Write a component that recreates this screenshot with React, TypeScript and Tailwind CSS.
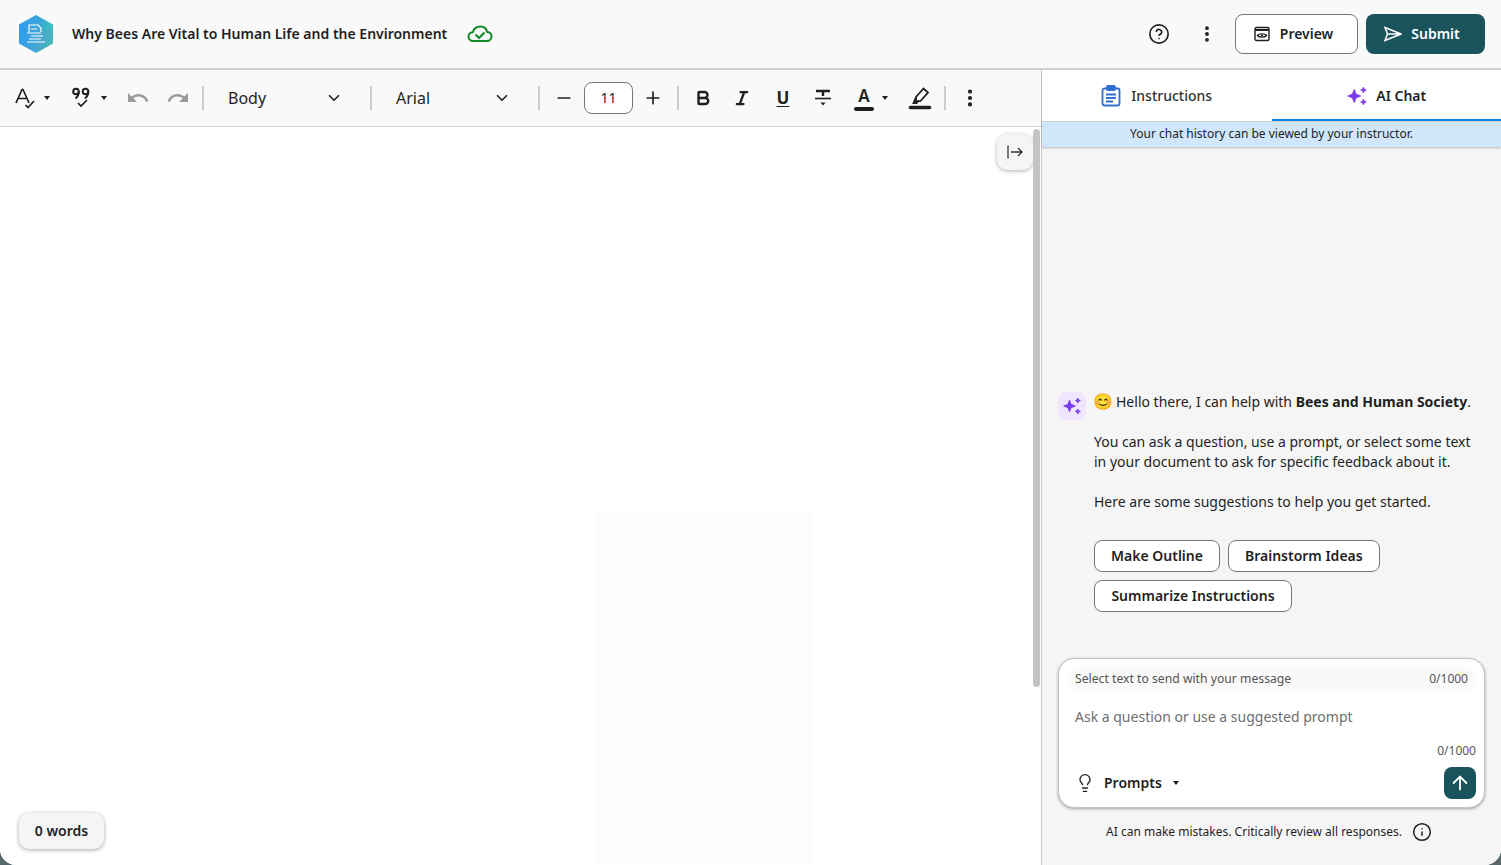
import React from 'react';
import { ArrowUp, Bold, ChevronDown, CircleHelp, EllipsisVertical, Info, Italic, Lightbulb, Minus, Plus } from 'lucide-react';
import { MdRedo, MdUndo } from 'react-icons/md';

function Caret() {
  return <span className="inline-block w-0 h-0 border-x-[3.5px] border-x-transparent border-t-[4px] border-t-[#1f1f1f]" />;
}

function Divider() {
  return <span className="block w-[2px] h-6 bg-[#cccccc]" />;
}

function Sparkles({ size }: { size: number }) {
  return (
    <svg width={size} height={size} viewBox="0 0 24 24" fill="#7c3aed" stroke="#7c3aed" strokeWidth="1" strokeLinejoin="round">
      <path d="M9 5 L11 10 L16 12 L11 14 L9 19 L7 14 L2 12 L7 10Z" />
      <path d="M19 2.5 L19.9 4.6 L22 5.5 L19.9 6.4 L19 8.5 L18.1 6.4 L16 5.5 L18.1 4.6Z" />
      <path d="M19 15.5 L19.9 17.6 L22 18.5 L19.9 19.4 L19 21.5 L18.1 19.4 L16 18.5 L18.1 17.6Z" />
    </svg>
  );
}

function Logo() {
  return (
    <svg width="36" height="40" viewBox="0 0 36 40">
      <defs>
        <linearGradient id="hexFill" x1="0" y1="0.2" x2="1" y2="0.5">
          <stop offset="0" stopColor="#2f9bf0" />
          <stop offset="0.6" stopColor="#3ea6d8" />
          <stop offset="1" stopColor="#2fd3b0" />
        </linearGradient>
      </defs>
      <path d="M18 1 L35 10.5 L35 29.5 L18 39 L1 29.5 L1 10.5Z" fill="url(#hexFill)" />
      <path d="M18 21 L35 12 L35 29.5 L18 39Z" fill="#5aa0c8" fillOpacity="0.55" />
      <g fill="none" stroke="#ffffff" strokeWidth="1.2">
        <path d="M11 18 V11 H20 L23 14 V18" />
        <path d="M13 15 H19 M9 19 H23 M13 22 H25 M11 25 H23 M9 28 H27" />
      </g>
    </svg>
  );
}

function SpellCheck() {
  return (
    <svg width="24" height="24" viewBox="0 0 24 24" fill="none" stroke="#1f1f1f" strokeWidth="1.7">
      <path d="M2 17 L8 3.5 H9 L15 17 M4.2 12.5 H12.8" />
      <path d="M11.5 19 L14 21.5 L20 15" />
    </svg>
  );
}

function QuoteCheck() {
  return (
    <svg width="24" height="24" viewBox="0 0 24 24" fill="none" stroke="#1f1f1f" strokeWidth="2">
      <circle cx="7" cy="5.5" r="2.8" />
      <path d="M9.8 5.5 C9.8 9 8.4 11 6.4 12.5" />
      <circle cx="16.5" cy="5.5" r="2.8" />
      <path d="M19.3 5.5 C19.3 9 17.9 11 15.9 12.5" />
      <path d="M9 17 L12 20 L18 14" strokeWidth="1.7" />
    </svg>
  );
}

function Toolbar() {
  return (
    <div className="h-[57px] flex items-center bg-[#f9f9f9] border-b border-[#d4d4d4] shadow-[0_1px_2px_rgba(0,0,0,0.15)] pl-[14px] text-[#1f1f1f] relative">
      <SpellCheck />
      <span className="ml-[6px] flex"><Caret /></span>
      <span className="ml-[19px]"><QuoteCheck /></span>
      <span className="ml-[8px] flex"><Caret /></span>
      <MdUndo size={24} className="ml-[19px] text-[#9a9a9a]" />
      <MdRedo size={24} className="ml-[16px] text-[#9a9a9a]" />
      <span className="ml-[12px]"><Divider /></span>
      <div className="w-[166px] pl-[24px] pr-[27px] flex items-center justify-between text-base">
        <span>Body</span>
        <ChevronDown size={18} strokeWidth={2.2} />
      </div>
      <Divider />
      <div className="w-[166px] pl-[24px] pr-[27px] flex items-center justify-between text-base">
        <span>Arial</span>
        <ChevronDown size={18} strokeWidth={2.2} />
      </div>
      <Divider />
      <Minus size={20} strokeWidth={2} className="ml-[14px]" />
      <div className="ml-[10px] w-[49px] h-[32px] rounded-lg border border-[#777777] bg-white flex items-center justify-center text-sm">11</div>
      <Plus size={20} strokeWidth={2} className="ml-[10px]" />
      <span className="ml-[14px]"><Divider /></span>
      <Bold size={18} strokeWidth={3.2} className="ml-[15px]" />
      <Italic size={18} strokeWidth={3} className="ml-[21px]" />
      <div className="ml-[23px] w-[18px] flex flex-col items-center">
        <span className="font-bold text-[17px] leading-[20px] underline underline-offset-2">U</span>
      </div>
      <svg width="24" height="24" viewBox="0 0 24 24" className="ml-[19px]" fill="none" stroke="#1f1f1f">
        <path d="M5 5 H19 M12 5 V10" strokeWidth="2.4" />
        <path d="M4 12.5 H20" strokeWidth="1.6" />
        <path d="M9.5 16.5 H14.5 L12 19.5Z" fill="#1f1f1f" stroke="none" />
      </svg>
      <div className="ml-[19px] w-[20px] flex flex-col items-center">
        <span className="font-semibold text-[17px] leading-[20px]">A</span>
        <span className="w-[20px] h-[4px] mt-[1px] rounded-full bg-[#1f1f1f]" />
      </div>
      <span className="ml-[8px] flex"><Caret /></span>
      <svg width="24" height="26" viewBox="0 0 24 26" className="ml-[20px]" fill="none" stroke="#1f1f1f" strokeWidth="1.8">
        <path d="M8 12 L15.5 3.5 L20 7.5 L12.5 16 L8 16.5Z" />
        <path d="M8 12 L5.5 18 H8.5 L10 16.5" />
        <path d="M2.5 22.5 H21.5" strokeWidth="3.6" strokeLinecap="round" />
      </svg>
      <span className="ml-[12px]"><Divider /></span>
      <EllipsisVertical size={22} strokeWidth={2.6} className="ml-[13px]" />
    </div>
  );
}

function Editor() {
  return (
    <div className="flex-1 min-w-0 flex flex-col">
      <Toolbar />
      <div className="flex-1 bg-white relative flex flex-col items-center overflow-hidden">
        <button className="absolute right-[8px] top-[7px] w-[36px] h-[36px] rounded-[11px] bg-[#f5f5f5] shadow-[0_1px_4px_rgba(0,0,0,0.3)] flex items-center justify-center">
          <svg width="18" height="18" viewBox="0 0 18 18" fill="none" stroke="#333333" strokeWidth="1.3">
            <path d="M2 2.5 V15.5 M5 9 H16 M12 5 L16 9 L12 13" />
          </svg>
        </button>
        <div className="absolute right-[1px] top-[2px] w-[7px] h-[558px] rounded bg-[#c4c4c4]" />
        <div className="absolute left-[597px] top-[385px] w-[214px] h-[352px] bg-[#fcfcfc]" />
        <div className="absolute left-[19px] bottom-[16px] h-[36px] w-[85px] rounded-[10px] bg-[#f5f5f5] shadow-[0_1px_4px_rgba(0,0,0,0.35)] flex items-center justify-center text-sm font-semibold text-[#1f1f1f]">0 words</div>
      </div>
    </div>
  );
}

function ChatPanel() {
  return (
    <div className="w-[460px] shrink-0 flex flex-col border-l border-[#c9c9c9] bg-[#f5f5f5] text-[#1f1f1f]">
      <div className="h-[52px] bg-white border-b border-[#d4d4d4] flex">
        <div className="flex-1 flex items-center justify-center gap-[10px] text-sm font-medium text-[#333333]">
          <svg width="20" height="22" viewBox="0 0 20 22" fill="none" stroke="#2f6fd6" strokeWidth="1.8">
            <rect x="1.5" y="3.5" width="17" height="17" rx="2" />
            <rect x="6" y="1" width="8" height="4" rx="1" fill="#2f6fd6" />
            <path d="M5 9.5 H15 M5 13 H15 M5 16.5 H12" />
          </svg>
          <span>Instructions</span>
        </div>
        <div className="flex-1 flex items-center justify-center gap-[8px] pt-[2px] text-sm font-semibold border-b-[2px] border-[#0a84e8]">
          <Sparkles size={22} />
          <span>AI Chat</span>
        </div>
      </div>
      <div className="h-[25px] pb-[1px] bg-[#d0e6fa] shadow-[0_1px_2px_rgba(0,0,0,0.25)] flex items-center justify-center text-xs">
        Your chat history can be viewed by your instructor.
      </div>
      <div className="flex-1 flex flex-col justify-end px-[16px]">
        <div className="flex gap-[8px]">
          <div className="w-[28px] h-[28px] shrink-0 rounded-lg bg-[#efe5ff] flex items-center justify-center">
            <Sparkles size={20} />
          </div>
          <div className="text-sm leading-[20px]">
            <p className="flex items-center">
              <span className="w-[18px] mr-[4px] flex justify-center text-[16px] leading-[20px] -translate-y-px">😊</span>
              <span>Hello there, I can help with <b className="font-bold">Bees and Human Society</b>.</span>
            </p>
            <p className="mt-[20px] w-[385px]">You can ask a question, use a prompt, or select some text in your document to ask for specific feedback about it.</p>
            <p className="mt-[20px]">Here are some suggestions to help you get started.</p>
            <div className="mt-[28px] flex flex-wrap gap-x-[8px] gap-y-[8px] font-semibold">
              <button className="h-[32px] px-[16px] rounded-lg border border-[#777777] bg-white">Make Outline</button>
              <button className="h-[32px] px-[16px] rounded-lg border border-[#777777] bg-white">Brainstorm Ideas</button>
              <button className="h-[32px] w-[198px] rounded-lg border border-[#777777] bg-white">Summarize Instructions</button>
            </div>
          </div>
        </div>
        <div className="mt-[46px] h-[150px] rounded-[16px] bg-white border border-[#c4c4c4] shadow-[0_1px_3px_rgba(0,0,0,0.35)] p-[8px] flex flex-col">
          <div className="h-[24px] rounded-full bg-[#f9f9f9] px-[8px] flex items-center justify-between text-[12.2px] text-[#555555]">
            <span>Select text to send with your message</span>
            <span className="text-xs">0/1000</span>
          </div>
          <div className="mt-[16px] px-[8px] text-sm text-[#6e6e6e] leading-[20px]">Ask a question or use a suggested prompt</div>
          <div className="mt-[16px] text-right text-xs text-[#555555] leading-[16px]">0/1000</div>
          <div className="mt-[8px] flex items-center justify-between">
            <div className="flex items-center pl-[8px] text-sm font-semibold">
              <Lightbulb size={20} strokeWidth={1.6} />
              <span className="ml-[9px]">Prompts</span>
              <span className="ml-[11px] flex"><Caret /></span>
            </div>
            <button className="w-[32px] h-[32px] rounded-lg bg-[#19535c] flex items-center justify-center text-white">
              <ArrowUp size={22} strokeWidth={2} />
            </button>
          </div>
        </div>
        <div className="h-[57px] pb-[9px] pr-[5px] flex items-center justify-center gap-[10px] text-xs">
          <span>AI can make mistakes. Critically review all responses.</span>
          <Info size={20} strokeWidth={1.8} />
        </div>
      </div>
    </div>
  );
}

export default function App() {
  return (
    <div className="w-[1501px] h-[865px] bg-[#56686a]">
      <div className="w-full h-full overflow-hidden rounded-b-[16px] flex flex-col bg-white font-['Noto_Sans',sans-serif]">
        <header className="h-[70px] shrink-0 bg-[#f9f9f9] border-b-2 border-[#cfcfcf] flex items-center pl-[18px] pr-[16px] text-[#1f1f1f]">
          <Logo />
          <h1 className="ml-[18px] text-sm font-semibold">Why Bees Are Vital to Human Life and the Environment</h1>
          <svg width="26" height="20" viewBox="0 0 26 20" fill="none" stroke="#0e8a24" strokeWidth="2" className="ml-[20px]">
            <path d="M6.5 17 C3.5 17 1.5 15 1.5 12.5 C1.5 10 3.5 8.2 5.8 8.2 C7 4.5 10 2.5 13.5 2.5 C17 2.5 19.5 5 20.2 8 C22.8 8.3 24.5 10.2 24.5 12.5 C24.5 15 22.5 17 19.5 17Z" />
            <path d="M8.5 10.5 L12 14 L17.5 8.5" />
          </svg>
          <div className="ml-auto flex items-center">
            <CircleHelp size={22} strokeWidth={1.8} />
            <EllipsisVertical size={20} strokeWidth={2.6} className="ml-[27px]" />
            <button className="ml-[18px] w-[123px] h-[40px] pr-[6px] rounded-lg border border-[#777777] bg-white flex items-center justify-center gap-[10px] text-sm font-semibold">
              <svg width="16" height="16" viewBox="0 0 16 16" fill="none" stroke="#1f1f1f" strokeWidth="1.4">
                <rect x="1" y="1.5" width="14" height="13" rx="1.5" />
                <path d="M1 4 H15" strokeWidth="2" />
                <path d="M3.5 9.5 C5 7.3 11 7.3 12.5 9.5 C11 11.7 5 11.7 3.5 9.5Z" />
                <circle cx="8" cy="9.5" r="1" fill="#1f1f1f" stroke="none" />
              </svg>
              Preview
            </button>
            <button className="ml-[8px] w-[119px] h-[40px] pr-[7px] rounded-lg bg-[#19535c] text-white flex items-center justify-center gap-[9px] text-sm font-semibold">
              <svg width="18" height="16" viewBox="0 0 18 16" fill="none" stroke="#ffffff" strokeWidth="1.5">
                <path d="M1 1.5 L17 8 L1 14.5 L3.5 8Z M3.5 8 H17" />
              </svg>
              Submit
            </button>
          </div>
        </header>
        <div className="flex-1 min-h-0 flex">
          <Editor />
          <ChatPanel />
        </div>
      </div>
    </div>
  );
}
